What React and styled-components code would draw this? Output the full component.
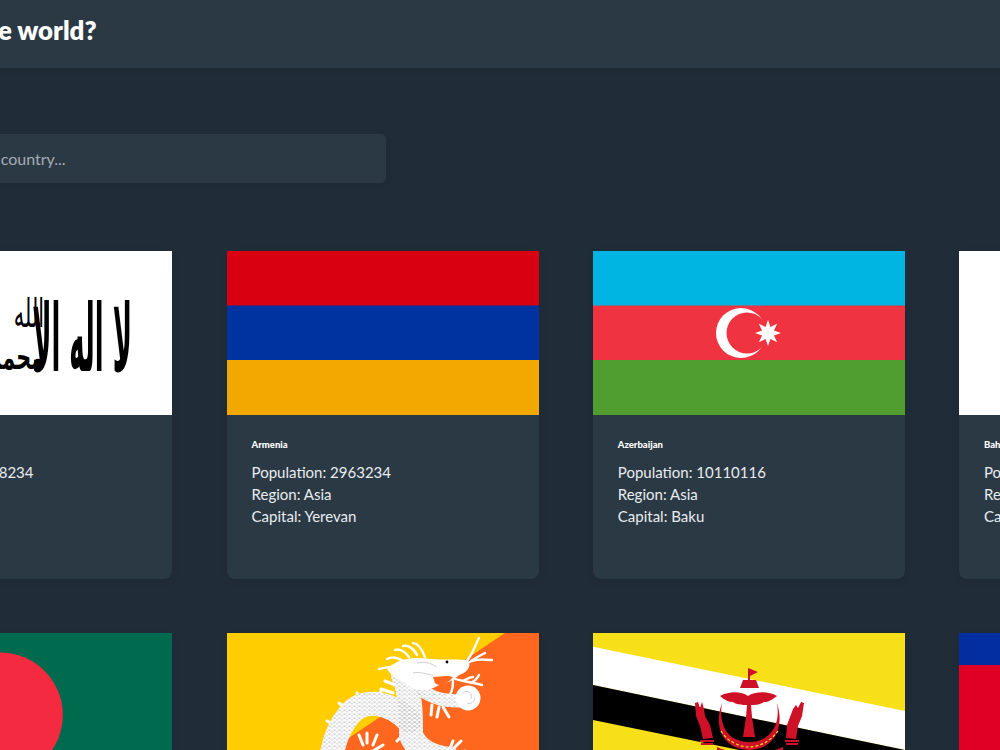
import React from "react";
import styled, { createGlobalStyle } from "styled-components";

const Global = createGlobalStyle`
  * { box-sizing: border-box; }
  html, body { margin: 0; padding: 0; height: 750px; overflow: hidden; background: #202c37; }
  body { font-family: "Lato", "Noto Sans", sans-serif; color: #fff; }
`;

const starPoints = (cx, cy, outer, inner, n) =>
  Array.from({ length: n * 2 }, (_, i) => {
    const r = i % 2 ? inner : outer;
    const a = (Math.PI * i) / n - Math.PI / 2;
    return `${(cx + r * Math.cos(a)).toFixed(2)},${(cy + r * Math.sin(a)).toFixed(2)}`;
  }).join(" ");

const Afghanistan = () => (
  <>
    <rect width="312" height="164" fill="#fff" />
    <g fill="#000" fontFamily="DejaVu Sans" direction="rtl">
      <text transform="translate(272 120) scale(0.72 2.6)" fontSize="36" fontWeight="700">لا اله الا</text>
      <text transform="translate(184 76) scale(0.8 1.5)" fontSize="26">الله</text>
      <text transform="translate(184 118) scale(0.8 1.3)" fontSize="26" fontWeight="700">محمد</text>
    </g>
  </>
);

const Armenia = () => (
  <>
    <rect width="312" height="55" fill="#d90012" />
    <rect y="54.5" width="312" height="55" fill="#0033a0" />
    <rect y="109" width="312" height="55" fill="#f2a800" />
  </>
);

const Azerbaijan = () => (
  <>
    <rect width="312" height="55" fill="#00b5e2" />
    <rect y="54.5" width="312" height="55" fill="#ef3340" />
    <rect y="109" width="312" height="55" fill="#509e2f" />
    <circle cx="148" cy="82" r="25" fill="#fff" />
    <circle cx="154" cy="82" r="20.5" fill="#ef3340" />
    <polygon points={starPoints(175, 82, 13, 6.4, 8)} fill="#fff" />
  </>
);

const Bahrain = () => (
  <>
    <rect width="312" height="164" fill="#fff" />
    <polygon points="312,0 100,0 130,16 100,33 130,49 100,66 130,82 100,98 130,115 100,131 130,148 100,164 312,164" fill="#ce1126" />
  </>
);

const Bangladesh = () => (
  <>
    <rect width="312" height="164" fill="#006a4e" />
    <circle cx="140.4" cy="82" r="62.4" fill="#f42a41" />
  </>
);

const Bhutan = () => (
  <>
    <defs>
      <pattern id="scales" width="5" height="4" patternUnits="userSpaceOnUse">
        <path d="M0 4a2.5 2.5 0 0 1 5 0M-2.5 2a2.5 2.5 0 0 1 5 0M2.5 2a2.5 2.5 0 0 1 5 0" fill="none" stroke="#bdbdbd" strokeWidth=".45" />
      </pattern>
    </defs>
    <rect width="312" height="164" fill="#ffcd00" />
    <polygon points="278,0 312,0 312,164 34,164" fill="#ff671f" />
    <g fill="none" stroke="#fff" strokeLinecap="round" strokeLinejoin="round">
      <g strokeWidth="3">
        <path d="M108 92L100 88M112 102L100 104M107 112L96 118M120 76L112 70M134 68L130 60M152 68L154 58M166 60L154 56M168 52L158 48" />
        <path d="M212 74L210 84M216 74L222 84M205 72L204 82" />
        <path d="M176 102L170 108M178 106L180 114M222 118L226 108M222 120L234 108M222 122L238 118" />
        <path d="M136 112L132 102M140 110L140 100M146 112L150 102M146 118L156 112" />
      </g>
      <path d="M176 42C184 60 184 84 184 102C190 118 205 124 222 126" strokeWidth="24" />
      <path d="M182 88C160 66 134 66 122 82C112 94 106 108 104 128" strokeWidth="24" />
      <path d="M196 58C210 68 224 68 236 68" strokeWidth="13" />
      <path d="M176 42C184 60 184 84 184 102C190 118 205 124 222 126" strokeWidth="24" stroke="url(#scales)" />
      <path d="M182 88C160 66 134 66 122 82C112 94 106 108 104 128" strokeWidth="24" stroke="url(#scales)" />
      <path d="M196 58C210 68 224 68 236 68" strokeWidth="13" stroke="url(#scales)" />
      <g strokeWidth="2.4">
        <path d="M238 30C246 22 247 14 252 5M240 30C250 25 256 27 265 27M244 28C250 24 254 22 258 20" />
        <path d="M176 32C166 34 160 34 152 36M176 28C170 24 164 24 160 26M182 24C176 16 170 16 168 17M190 22C186 14 180 12 176 13M198 24C194 14 190 10 186 10" />
        <path d="M222 44C232 48 240 48 255 52M236 48C240 46 242 44 246 44M244 50C248 48 250 46 252 42" />
        <path d="M226 48C226 56 224 62 220 64" />
      </g>
    </g>
    <path d="M160 36C172 24 190 24 204 26C214 27 226 26 240 27C246 32 240 40 232 42C226 48 220 50 212 52C200 60 186 58 178 50C170 46 164 42 160 36Z" fill="#fff" />
    <path d="M206 44C212 44 220 42 226 44C220 52 212 54 208 50Z" fill="#ff671f" />
    <circle cx="220" cy="29" r="1.4" fill="#000" />
    <path d="M190 30C196 28 204 30 210 34M186 40C194 38 200 42 206 42" fill="none" stroke="#cfcfcf" />
    <circle cx="241" cy="65" r="12.5" fill="#fff" />
    <path d="M236 60C240 56 246 60 244 66M240 70C244 72 248 68 248 64" fill="none" stroke="#cfcfcf" />
  </>
);

const Brunei = () => (
  <>
    <rect width="312" height="164" fill="#f7e017" />
    <polygon points="0,13.7 312,78 312,117 0,52" fill="#fff" />
    <polygon points="0,52 312,117 312,151 0,87" fill="#000" />
    <g fill="#ce1126">
      <path d="M155 35L155 47L157 47L157 43L165 39Z" />
      <path d="M150 47L163 47L166 55L147 55Z" />
      <path d="M127 63C136 58 148 58 155 63C162 58 176 58 184 63C178 67 176 69 171 69C166 72 162 72 158 72L159 84L162 104L150 104L153 84L154 72C150 72 144 72 140 69C135 69 132 67 127 63Z" />
      <path d="M129 70C119 98 134 117 156 117C178 117 193 98 184 70C188 94 176 109 156 109C136 109 125 94 129 70Z" />
      <path d="M102 70L105 69L107 75L109 69L111 76L112 83L117 92L120 105L110 106L107 93L103 83Z" />
      <path d="M211 70L208 69L205 75L203 72L200 76L197 84L194 92L193 105L203 106L205 93L209 83Z" />
      <path d="M107 107H121V109H107ZM108 110H120V112H108ZM192 107H206V109H192ZM193 110H205V112H193Z" />
      <path d="M124 114C140 122 172 122 190 114L190 120H124Z" />
    </g>
    <path d="M128 98C134 108 146 114 156 114C166 114 178 108 185 98" fill="none" stroke="#f7e017" strokeWidth="1.2" strokeDasharray="3 2" />
  </>
);

const Cambodia = () => (
  <>
    <rect width="312" height="164" fill="#e00025" />
    <rect width="312" height="32" fill="#032ea1" />
  </>
);

const countries = [
  { name: "Afghanistan", population: 40218234, region: "Asia", capital: "Kabul", Flag: Afghanistan },
  { name: "Armenia", population: 2963234, region: "Asia", capital: "Yerevan", Flag: Armenia },
  { name: "Azerbaijan", population: 10110116, region: "Asia", capital: "Baku", Flag: Azerbaijan },
  { name: "Bahrain", population: 1701583, region: "Asia", capital: "Manama", Flag: Bahrain },
  { name: "Bangladesh", population: 164689383, region: "Asia", capital: "Dhaka", Flag: Bangladesh },
  { name: "Bhutan", population: 771612, region: "Asia", capital: "Thimphu", Flag: Bhutan },
  { name: "Brunei", population: 437483, region: "Asia", capital: "Bandar Seri Begawan", Flag: Brunei },
  { name: "Cambodia", population: 16718971, region: "Asia", capital: "Phnom Penh", Flag: Cambodia },
];

export default function App() {
  return (
    <Page>
      <Global />
      <Nav>
        <Title>Where in the world?</Title>
      </Nav>
      <Main>
        <Search placeholder="Search for a country..." />
        <Grid>
          {countries.map(({ name, population, region, capital, Flag }) => (
            <Card key={name}>
              <FlagSvg viewBox="0 0 312 164">
                <Flag />
              </FlagSvg>
              <Body>
                <Name>{name}</Name>
                <Info>Population: {population}</Info>
                <Info>Region: {region}</Info>
                <Info>Capital: {capital}</Info>
              </Body>
            </Card>
          ))}
        </Grid>
      </Main>
    </Page>
  );
}

const Page = styled.div`
  width: 1440px;
  margin-left: -219.6px;
`;

const Nav = styled.header`
  height: 68px;
  padding: 14px 80px 0;
  background: #2b3945;
  box-shadow: 0 2px 6px rgba(0, 0, 0, 0.1);
`;

const Title = styled.h1`
  margin: 0;
  font-size: 25.8px;
  line-height: 32px;
  font-weight: 800;
`;

const Main = styled.main`
  padding: 66px 80px 0;
`;

const Search = styled.input`
  display: block;
  width: 526px;
  height: 49px;
  padding: 0 0 0 53px;
  border: none;
  outline: none;
  border-radius: 5px;
  background: #2b3945;
  color: #fff;
  font: 400 16px "Lato", "Noto Sans", sans-serif;
  box-shadow: 0 2px 9px rgba(0, 0, 0, 0.05);

  &::placeholder {
    color: #a3acb3;
  }
`;

const Grid = styled.section`
  display: grid;
  grid-template-columns: repeat(4, 312px);
  column-gap: 54.2px;
  row-gap: 54px;
  margin-top: 68px;
`;

const Card = styled.article`
  background: #2b3945;
  border-radius: 8px;
  box-shadow: 0 2px 9px rgba(0, 0, 0, 0.08);
`;

const FlagSvg = styled.svg`
  display: block;
  width: 312px;
  height: 164px;
`;

const Body = styled.div`
  height: 164px;
  padding: 25px 25px 0;
`;

const Name = styled.h2`
  margin: 0 0 11px;
  font-size: 9.5px;
  line-height: 10px;
  font-weight: 900;
`;

const Info = styled.p`
  margin: 0;
  font-size: 15px;
  line-height: 22px;
  color: #e8ecef;
`;
